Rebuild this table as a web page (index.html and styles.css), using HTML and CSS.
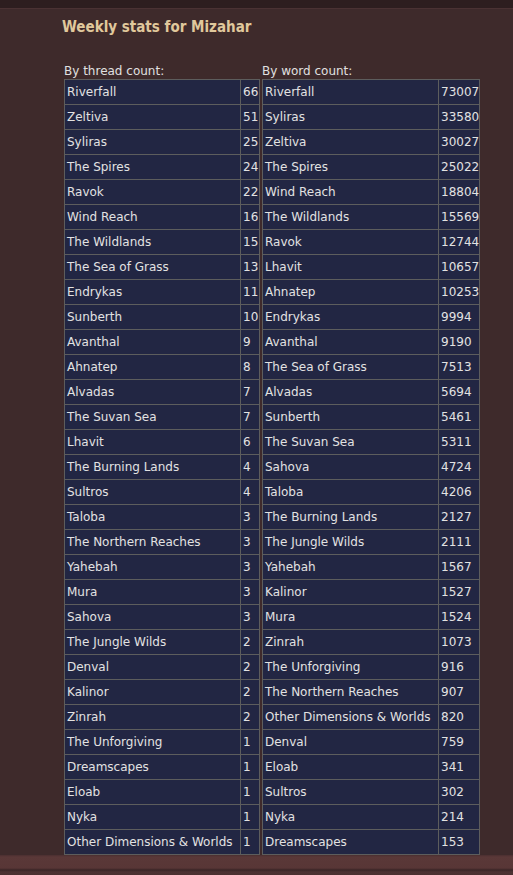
FILE: index.html
```html
<!DOCTYPE html>
<html lang="en">
<head>
    <meta charset="UTF-8">
    <title>Weekly stats for Mizahar</title>
    <link rel="stylesheet" href="styles.css">
</head>
<body>
    <div class="top-bar"></div>
    <div class="page">
        <h1>Weekly stats for Mizahar</h1>
        <div class="stats">
            <div class="stat-block">
                <div class="label">By thread count:</div>
                <table class="stat-table threads">
                    <tr><td>Riverfall</td><td>66</td></tr>
                    <tr><td>Zeltiva</td><td>51</td></tr>
                    <tr><td>Syliras</td><td>25</td></tr>
                    <tr><td>The Spires</td><td>24</td></tr>
                    <tr><td>Ravok</td><td>22</td></tr>
                    <tr><td>Wind Reach</td><td>16</td></tr>
                    <tr><td>The Wildlands</td><td>15</td></tr>
                    <tr><td>The Sea of Grass</td><td>13</td></tr>
                    <tr><td>Endrykas</td><td>11</td></tr>
                    <tr><td>Sunberth</td><td>10</td></tr>
                    <tr><td>Avanthal</td><td>9</td></tr>
                    <tr><td>Ahnatep</td><td>8</td></tr>
                    <tr><td>Alvadas</td><td>7</td></tr>
                    <tr><td>The Suvan Sea</td><td>7</td></tr>
                    <tr><td>Lhavit</td><td>6</td></tr>
                    <tr><td>The Burning Lands</td><td>4</td></tr>
                    <tr><td>Sultros</td><td>4</td></tr>
                    <tr><td>Taloba</td><td>3</td></tr>
                    <tr><td>The Northern Reaches</td><td>3</td></tr>
                    <tr><td>Yahebah</td><td>3</td></tr>
                    <tr><td>Mura</td><td>3</td></tr>
                    <tr><td>Sahova</td><td>3</td></tr>
                    <tr><td>The Jungle Wilds</td><td>2</td></tr>
                    <tr><td>Denval</td><td>2</td></tr>
                    <tr><td>Kalinor</td><td>2</td></tr>
                    <tr><td>Zinrah</td><td>2</td></tr>
                    <tr><td>The Unforgiving</td><td>1</td></tr>
                    <tr><td>Dreamscapes</td><td>1</td></tr>
                    <tr><td>Eloab</td><td>1</td></tr>
                    <tr><td>Nyka</td><td>1</td></tr>
                    <tr><td>Other Dimensions &amp; Worlds</td><td>1</td></tr>
                </table>
            </div>
            <div class="stat-block">
                <div class="label">By word count:</div>
                <table class="stat-table words">
                    <tr><td>Riverfall</td><td>73007</td></tr>
                    <tr><td>Syliras</td><td>33580</td></tr>
                    <tr><td>Zeltiva</td><td>30027</td></tr>
                    <tr><td>The Spires</td><td>25022</td></tr>
                    <tr><td>Wind Reach</td><td>18804</td></tr>
                    <tr><td>The Wildlands</td><td>15569</td></tr>
                    <tr><td>Ravok</td><td>12744</td></tr>
                    <tr><td>Lhavit</td><td>10657</td></tr>
                    <tr><td>Ahnatep</td><td>10253</td></tr>
                    <tr><td>Endrykas</td><td>9994</td></tr>
                    <tr><td>Avanthal</td><td>9190</td></tr>
                    <tr><td>The Sea of Grass</td><td>7513</td></tr>
                    <tr><td>Alvadas</td><td>5694</td></tr>
                    <tr><td>Sunberth</td><td>5461</td></tr>
                    <tr><td>The Suvan Sea</td><td>5311</td></tr>
                    <tr><td>Sahova</td><td>4724</td></tr>
                    <tr><td>Taloba</td><td>4206</td></tr>
                    <tr><td>The Burning Lands</td><td>2127</td></tr>
                    <tr><td>The Jungle Wilds</td><td>2111</td></tr>
                    <tr><td>Yahebah</td><td>1567</td></tr>
                    <tr><td>Kalinor</td><td>1527</td></tr>
                    <tr><td>Mura</td><td>1524</td></tr>
                    <tr><td>Zinrah</td><td>1073</td></tr>
                    <tr><td>The Unforgiving</td><td>916</td></tr>
                    <tr><td>The Northern Reaches</td><td>907</td></tr>
                    <tr><td>Other Dimensions &amp; Worlds</td><td>820</td></tr>
                    <tr><td>Denval</td><td>759</td></tr>
                    <tr><td>Eloab</td><td>341</td></tr>
                    <tr><td>Sultros</td><td>302</td></tr>
                    <tr><td>Nyka</td><td>214</td></tr>
                    <tr><td>Dreamscapes</td><td>153</td></tr>
                </table>
            </div>
        </div>
    </div>
    <div class="bottom-bar"></div>
</body>
</html>
```

FILE: styles.css
```css
* {
    margin: 0;
    padding: 0;
    box-sizing: border-box;
}

body {
    font-family: 'DejaVu Sans', Verdana, sans-serif;
    background: #3e2a2b;
    color: #e2e2e2;
    height: 875px;
    overflow: hidden;
}

.top-bar {
    height: 9px;
    background: #2d1e1f;
    border-bottom: 1px solid #4a3233;
}

.page {
    padding: 8px 0 0 62px;
}

h1 {
    font-family: 'DejaVu Sans Condensed', 'DejaVu Sans', sans-serif;
    font-stretch: condensed;
    font-size: 15px;
    font-weight: bold;
    color: #e0c89c;
    line-height: 20px;
    height: 42px;
}

.stats {
    display: flex;
    gap: 2px;
    padding-left: 2px;
}

.label {
    font-size: 12px;
    line-height: 16px;
    margin-top: 4px;
    color: #e0e0e0;
}

.stat-table {
    border-collapse: collapse;
    table-layout: fixed;
    background: #222643;
    border: 1px solid #5d5d5d;
    font-size: 12px;
}

.stat-table td {
    border: 1px solid #5d5d5d;
    height: 25px;
    padding: 0 2px;
    white-space: nowrap;
    overflow: hidden;
    vertical-align: middle;
}

.threads {
    width: 196px;
}

.threads td:first-child {
    width: 176px;
}

.words {
    width: 218px;
}

.words td:first-child {
    width: 176px;
}

.bottom-bar {
    position: absolute;
    left: 0;
    right: 0;
    top: 855px;
    height: 20px;
    background: linear-gradient(#4a2f30 0, #5a3838 2px, #583636 13px, #3a2526 15px, #4d3233 17px, #4a3030 100%);
}
```
